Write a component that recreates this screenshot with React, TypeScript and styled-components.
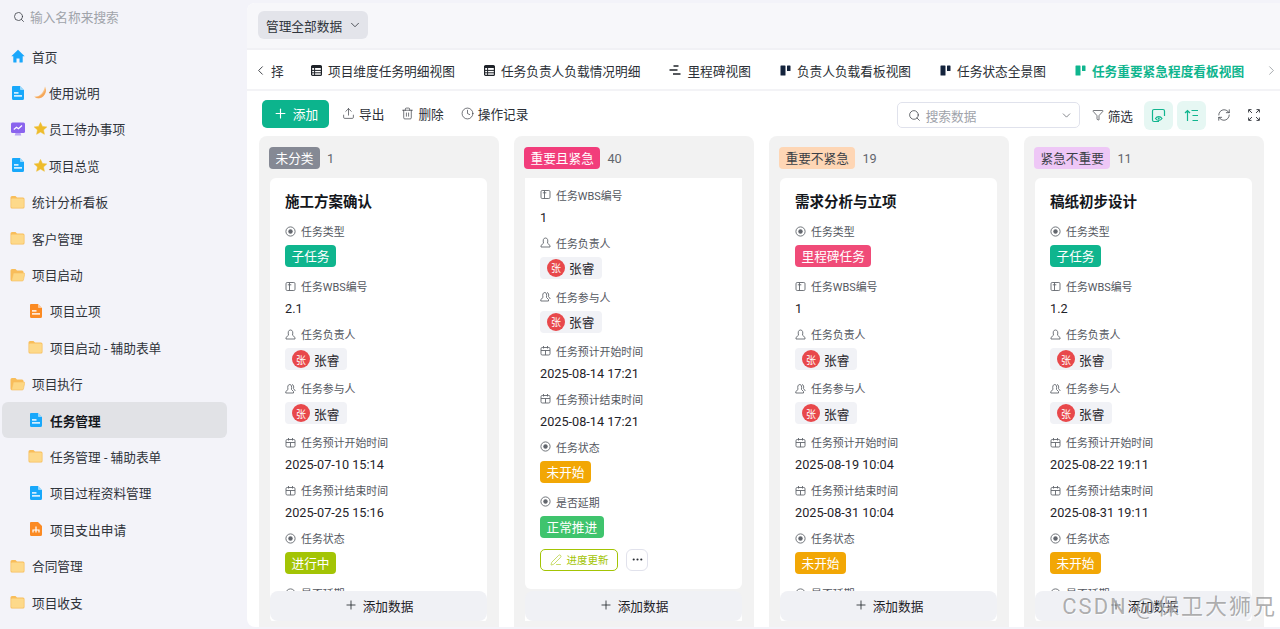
import React from "react";
import styled, { createGlobalStyle } from "styled-components";
import { ChevronDown, ChevronLeft, ChevronRight, Clock, Ellipsis, Funnel, PenLine, Plus, RefreshCw, Search, Trash2, Upload } from "lucide-react";

const GlobalStyle = createGlobalStyle`
  html, body {
    margin: 0;
    height: 100%;
    overflow: hidden;
    background: #f3f3f9;
    font-family: Roboto, "Noto Sans CJK SC", sans-serif;
    color: #1f2329;
  }
`;

/* ---- drawn icons ---- */

const DocIcon = ({ color = "#18a8fb" }: { color?: string }) => (
  <svg width="14" height="14" viewBox="0 0 14 14">
    <path d="M2 0h7l4 4v8.5a1.5 1.5 0 0 1-1.5 1.5h-9.500A1.500 1.500 0 0 1 1 12.500V1a1 1 0 0 1 1-1z" fill={color} />
    <path d="M9 0l4 4H9.800A.8.8 0 0 1 9 3.200z" fill="#fff" opacity=".55" />
    <rect x="3" y="6.200" width="4.500" height="1.400" fill="#fff" />
    <rect x="3" y="9.200" width="8" height="1.400" fill="#fff" />
  </svg>
);

const FolderIcon = ({ open }: { open?: boolean }) => (
  <svg width="15" height="14" viewBox="0 0 15 14">
    {open ? (
      <>
        <path d="M.5 2.500A1.500 1.500 0 0 1 2 1h3.500L7 2.500h5a1.500 1.500 0 0 1 1.500 1.500v1H4L2 13H2a1.500 1.500 0 0 1-1.500-1.500z" fill="#f8bd5a" />
        <path d="M3.500 5h10.200a1 1 0 0 1 1 1.200l-1.300 6a1.200 1.200 0 0 1-1.200.8H1.500z" fill="#fdd784" stroke="#f8bd5a" strokeWidth=".6" />
      </>
    ) : (
      <>
        <path d="M.5 2.500A1.500 1.500 0 0 1 2 1h3.500L7 2.500h6a1.500 1.500 0 0 1 1.500 1.500v8a1.500 1.500 0 0 1-1.500 1.500H2A1.500 1.500 0 0 1 .5 12z" fill="#f8bd5a" />
        <rect x="1.200" y="3.600" width="12.600" height="9.200" rx="1" fill="#fdd98a" />
      </>
    )}
  </svg>
);

const HomeIcon = () => (
  <svg width="14" height="14" viewBox="0 0 14 14">
    <path d="M7 .8L.3 7.200h2V13a.6.6 0 0 0 .6.600h2.600V9.500h3v4.100h2.600a.6.6 0 0 0 .6-.6V7.200h2z" fill="#1aa7fb" />
  </svg>
);

const MonitorIcon = () => (
  <svg width="14" height="14" viewBox="0 0 14 14">
    <path d="M4.500 11h5l.8 2.500H3.700z" fill="#b9a4f5" />
    <rect x="0" y="0.500" width="14" height="10.500" rx="1.500" fill="#8a63ee" />
    <path d="M2.800 7.500l2.700-2.300 2 1.500 3.500-3.200" fill="none" stroke="#fff" strokeWidth="1.200" />
  </svg>
);

const ExpenseIcon = () => (
  <svg width="14" height="14" viewBox="0 0 14 14">
    <path d="M2 0h7l4 4v8.500a1.500 1.500 0 0 1-1.500 1.500h-9.500A1.500 1.500 0 0 1 1 12.500V1a1 1 0 0 1 1-1z" fill="#fb8a23" />
    <path d="M7 4.500v2.500M4 10.500V8h6v2.500M7 7v3.500" fill="none" stroke="#fff" strokeWidth="1.200" />
  </svg>
);

const MoonIcon = () => (
  <svg width="13" height="13" viewBox="0 0 13 13">
    <path d="M11 .5C13.500 5 10.500 12 5 12.500 3 12.700 1.200 12 .3 10.300 4 11.500 9.500 8 11 .5z" fill="#f9c283" />
    <path d="M11.700 2.500C12.500 6.500 10 11.600 5 12.100 3.500 12.200 2.300 12 1.300 11.200 5.500 11.500 10 8 11.700 2.500z" fill="#f5a75c" />
  </svg>
);

const StarIcon = () => (
  <svg width="13" height="13" viewBox="0 0 13 13">
    <path d="M6.500.4l1.900 4 4.400.5-3.300 3 .9 4.400-3.900-2.200-3.900 2.200.9-4.400L.2 4.900l4.400-.5z" fill="#eebc2c" stroke="#eebc2c" strokeLinejoin="round" strokeWidth=".5" />
  </svg>
);

const TableIcon = () => (
  <svg width="11" height="11" viewBox="0 0 11 11">
    <rect x=".6" y=".6" width="9.800" height="9.800" rx="1" fill="none" stroke="#1f2329" strokeWidth="1.200" />
    <path d="M.6 1h9.800v2H.6z" fill="#1f2329" />
    <path d="M.6 5.400h9.800M.6 7.800h9.800M3.600 3v7" stroke="#1f2329" strokeWidth="1" />
  </svg>
);

const GanttIcon = () => (
  <svg width="12" height="12" viewBox="0 0 12 12">
    <path d="M4.500 2h5M.5 6h8M4 10h7.500" stroke="#1f2329" strokeWidth="1.600" />
  </svg>
);

const KanbanIcon = ({ color = "#14233c" }: { color?: string }) => (
  <svg width="11" height="11" viewBox="0 0 11 11">
    <rect x="0.500" y="0.500" width="5" height="10" rx=".6" fill={color} />
    <rect x="7" y="0.500" width="3.500" height="5.500" rx=".6" fill={color} />
  </svg>
);

const StickerIcon = () => (
  <svg width="15" height="15" viewBox="0 0 15 15" fill="none" stroke="#11b58f" strokeWidth="1.200">
    <path d="M8 13.500H3A1.500 1.500 0 0 1 1.500 12V3A1.500 1.500 0 0 1 3 1.500h9A1.500 1.500 0 0 1 13.500 3v5" />
    <path d="M4.500 10.500c1.500-2.500 5-2.500 6.500 0-1.500 2.500-5 2.500-6.500 0z" />
    <circle cx="7.750" cy="10.500" r="1" fill="#11b58f" stroke="none" />
  </svg>
);

const SortIcon = () => (
  <svg width="15" height="15" viewBox="0 0 15 15" fill="none" stroke="#11b58f" strokeWidth="1.200">
    <path d="M3.500 13V2.500M1 5l2.500-2.500L6 5M7.500 2.500H14M8.500 7.500H14M8.500 12.500H14" />
  </svg>
);

const FullscreenIcon = () => (
  <svg width="12" height="12" viewBox="0 0 12 12" fill="none" stroke="#2b2f36" strokeWidth=".9">
    <path d="M.6 3.500V.6h2.900M8.500.6h2.900v2.900M.6 8.500v2.900h2.900M8.500 11.400h2.900V8.500M1 1l3 3M11 1L8 4M1 11l3-3M11 11L8 8" />
  </svg>
);

type FieldKind = "radio" | "text" | "user" | "users" | "date";

const FieldIcon = ({ kind }: { kind: FieldKind }) => (
  <svg width="11" height="11" viewBox="0 0 11 11" fill="none" stroke="#62666d" strokeWidth=".9">
    {kind === "radio" && (
      <>
        <circle cx="5.500" cy="5.500" r="4.600" />
        <circle cx="5.500" cy="5.500" r="2.200" fill="#62666d" stroke="none" />
      </>
    )}
    {kind === "text" && (
      <>
        <rect x="1" y="1.500" width="9" height="8" rx="1.200" />
        <path d="M4.500 1.500v8M2.800 3.800h3.500" />
      </>
    )}
    {kind === "user" && (
      <path d="M3.500 6.200C2.700 3 3.500 1 5.500 1s2.800 2 2 5.200L10 8.500V10H1V8.500z" />
    )}
    {kind === "users" && (
      <>
        <path d="M3 6.500C2.300 3.500 3 1.500 4.800 1.500S6.800 3.500 6.500 6.500L8.500 8.500V10H.8V8.500z" />
        <path d="M7 1.500c1.500.3 2 2 1.500 4l1.800 2.500" />
      </>
    )}
    {kind === "date" && (
      <>
        <rect x="1" y="2.500" width="9" height="7.500" rx="1.200" />
        <path d="M1 5.500h9M3.500 1v2.500M7.500 1v2.500M5.500 5.500V10" />
      </>
    )}
  </svg>
);

/* ---- data ---- */

type NavIcon = "home" | "doc" | "monitor" | "folder" | "open" | "orange" | "expense";

interface NavItem {
  name: string;
  icon: NavIcon;
  child?: boolean;
  active?: boolean;
  prefix?: "moon" | "star";
}

const navItems: NavItem[] = [
  { name: "首页", icon: "home" },
  { name: "使用说明", icon: "doc", prefix: "moon" },
  { name: "员工待办事项", icon: "monitor", prefix: "star" },
  { name: "项目总览", icon: "doc", prefix: "star" },
  { name: "统计分析看板", icon: "folder" },
  { name: "客户管理", icon: "folder" },
  { name: "项目启动", icon: "open" },
  { name: "项目立项", icon: "orange", child: true },
  { name: "项目启动 - 辅助表单", icon: "folder", child: true },
  { name: "项目执行", icon: "open" },
  { name: "任务管理", icon: "doc", child: true, active: true },
  { name: "任务管理 - 辅助表单", icon: "folder", child: true },
  { name: "项目过程资料管理", icon: "doc", child: true },
  { name: "项目支出申请", icon: "expense", child: true },
  { name: "合同管理", icon: "folder" },
  { name: "项目收支", icon: "folder" },
];

const renderNavIcon = (icon: NavIcon) => {
  switch (icon) {
    case "home":
      return <HomeIcon />;
    case "doc":
      return <DocIcon />;
    case "monitor":
      return <MonitorIcon />;
    case "open":
      return <FolderIcon open />;
    case "orange":
      return <DocIcon color="#fb8a23" />;
    case "expense":
      return <ExpenseIcon />;
    default:
      return <FolderIcon />;
  }
};

const tabs = [
  { name: "项目维度任务明细视图", icon: <TableIcon /> },
  { name: "任务负责人负载情况明细", icon: <TableIcon /> },
  { name: "里程碑视图", icon: <GanttIcon /> },
  { name: "负责人负载看板视图", icon: <KanbanIcon /> },
  { name: "任务状态全景图", icon: <KanbanIcon /> },
];

const GREEN = "#0fb58e";
const PINK = "#f04b78";
const AMBER = "#f2a705";
const LIME = "#a3c405";

interface TaskCard {
  title: string;
  typeName: string;
  typeColor: string;
  wbs: string;
  start: string;
  end: string;
  status: string;
  statusColor: string;
}

interface BoardColumn {
  tag: string;
  tagBg: string;
  tagColor: string;
  count: number;
  card?: TaskCard;
}

const columns: BoardColumn[] = [
  {
    tag: "未分类",
    tagBg: "#858994",
    tagColor: "#fff",
    count: 1,
    card: {
      title: "施工方案确认",
      typeName: "子任务",
      typeColor: GREEN,
      wbs: "2.1",
      start: "2025-07-10 15:14",
      end: "2025-07-25 15:16",
      status: "进行中",
      statusColor: LIME,
    },
  },
  { tag: "重要且紧急", tagBg: "#f23d7b", tagColor: "#fff", count: 40 },
  {
    tag: "重要不紧急",
    tagBg: "#fed6b5",
    tagColor: "#3b3f46",
    count: 19,
    card: {
      title: "需求分析与立项",
      typeName: "里程碑任务",
      typeColor: PINK,
      wbs: "1",
      start: "2025-08-19 10:04",
      end: "2025-08-31 10:04",
      status: "未开始",
      statusColor: AMBER,
    },
  },
  {
    tag: "紧急不重要",
    tagBg: "#eec7f6",
    tagColor: "#3b3f46",
    count: 11,
    card: {
      title: "稿纸初步设计",
      typeName: "子任务",
      typeColor: GREEN,
      wbs: "1.2",
      start: "2025-08-22 19:11",
      end: "2025-08-31 19:11",
      status: "未开始",
      statusColor: AMBER,
    },
  },
];

/* ---- small parts ---- */

const Person = () => (
  <PersonChip>
    <Avatar>张</Avatar>
    张睿
  </PersonChip>
);

const Label = ({ kind, text }: { kind: FieldKind; text: string }) => (
  <FieldLabel>
    <FieldIcon kind={kind} />
    {text}
  </FieldLabel>
);

const PeopleAndDates = ({ start, end }: { start: string; end: string }) => (
  <>
    <Field>
      <Label kind="user" text="任务负责人" />
      <Person />
    </Field>
    <Field>
      <Label kind="users" text="任务参与人" />
      <Person />
    </Field>
    <Field>
      <Label kind="date" text="任务预计开始时间" />
      <FieldValue>{start}</FieldValue>
    </Field>
    <Field>
      <Label kind="date" text="任务预计结束时间" />
      <FieldValue>{end}</FieldValue>
    </Field>
  </>
);

const App = () => {
  return (
    <Page>
      <GlobalStyle />
      <Sidebar>
        <SideSearch>
          <Search size={12} strokeWidth={1.6} color="#3b3f46" />
          输入名称来搜索
        </SideSearch>
        <NavList>
          {navItems.map((item) => (
            <NavRow key={item.name} $child={item.child} $active={item.active}>
              <NavIconBox>{renderNavIcon(item.icon)}</NavIconBox>
              {item.prefix ? (
                <NavPrefix>{item.prefix === "moon" ? <MoonIcon /> : <StarIcon />}</NavPrefix>
              ) : null}
              {item.name}
            </NavRow>
          ))}
        </NavList>
      </Sidebar>

      <Main>
        <TopBar>
          <ScopeButton>
            管理全部数据
            <ChevronDown size={14} strokeWidth={1.4} />
          </ScopeButton>
        </TopBar>

        <TabBar>
          <TabArrow>
            <ChevronLeft size={15} strokeWidth={1.4} />
          </TabArrow>
          <CutTab>择</CutTab>
          {tabs.map((tab) => (
            <Tab key={tab.name}>
              {tab.icon}
              {tab.name}
            </Tab>
          ))}
          <Tab $active>
            <KanbanIcon color="#0fb58e" />
            任务重要紧急程度看板视图
          </Tab>
          <TabArrowRight>
            <ChevronRight size={15} strokeWidth={1.2} color="#8a8d93" />
          </TabArrowRight>
        </TabBar>

        <Toolbar>
          <ToolGroup>
            <AddButton>
              <Plus size={15} strokeWidth={1.8} />
              添加
            </AddButton>
            <ToolButton>
              <Upload size={13} strokeWidth={1.2} />
              导出
            </ToolButton>
            <ToolButton>
              <Trash2 size={13} strokeWidth={1.2} />
              删除
            </ToolButton>
            <ToolButton>
              <Clock size={13} strokeWidth={1.2} />
              操作记录
            </ToolButton>
          </ToolGroup>
          <RightGroup>
            <SearchBox>
              <Search size={13} strokeWidth={1.4} color="#3b3f46" />
              <SearchText>搜索数据</SearchText>
              <ChevronDown size={13} strokeWidth={1.3} color="#55585f" />
            </SearchBox>
            <FilterButton>
              <Funnel size={12} strokeWidth={1.3} />
              筛选
            </FilterButton>
            <ToggleButton>
              <StickerIcon />
            </ToggleButton>
            <ToggleButton>
              <SortIcon />
            </ToggleButton>
            <PlainIconButton>
              <RefreshCw size={14} strokeWidth={1.2} color="#2b2f36" />
            </PlainIconButton>
            <PlainIconButton>
              <FullscreenIcon />
            </PlainIconButton>
          </RightGroup>
        </Toolbar>

        <Board>
          {columns.map((column) => (
            <Column key={column.tag}>
              <ColumnHeader>
                <ColumnTag $bg={column.tagBg} $color={column.tagColor}>
                  {column.tag}
                </ColumnTag>
                <ColumnCount>{column.count}</ColumnCount>
              </ColumnHeader>
              <CardList>
                {column.card ? (
                  <Card>
                    <CardTitle>{column.card.title}</CardTitle>
                    <Field>
                      <Label kind="radio" text="任务类型" />
                      <ColorTag $bg={column.card.typeColor}>{column.card.typeName}</ColorTag>
                    </Field>
                    <Field>
                      <Label kind="text" text="任务WBS编号" />
                      <FieldValue>{column.card.wbs}</FieldValue>
                    </Field>
                    <PeopleAndDates start={column.card.start} end={column.card.end} />
                    <Field>
                      <Label kind="radio" text="任务状态" />
                      <ColorTag $bg={column.card.statusColor}>{column.card.status}</ColorTag>
                    </Field>
                    <Field>
                      <Label kind="radio" text="是否延期" />
                    </Field>
                  </Card>
                ) : (
                  <>
                    <ScrolledCard>
                      <Field>
                        <Label kind="text" text="任务WBS编号" />
                        <FieldValue>1</FieldValue>
                      </Field>
                      <PeopleAndDates start="2025-08-14 17:21" end="2025-08-14 17:21" />
                      <Field>
                        <Label kind="radio" text="任务状态" />
                        <ColorTag $bg={AMBER}>未开始</ColorTag>
                      </Field>
                      <Field>
                        <Label kind="radio" text="是否延期" />
                        <ColorTag $bg="#3fc46d">正常推进</ColorTag>
                      </Field>
                      <CardActions>
                        <ProgressButton>
                          <PenLine size={12} strokeWidth={1.2} />
                          进度更新
                        </ProgressButton>
                        <MoreButton>
                          <Ellipsis size={13} strokeWidth={2} />
                        </MoreButton>
                      </CardActions>
                    </ScrolledCard>
                    <NextCard />
                  </>
                )}
              </CardList>
              <AddData>
                <Plus size={14} strokeWidth={1.4} />
                添加数据
              </AddData>
            </Column>
          ))}
        </Board>
      </Main>
      <Watermark>CSDN @保卫大狮兄</Watermark>
    </Page>
  );
};

/* ---- styles ---- */

const Page = styled.div`
  display: flex;
  height: 100vh;
  overflow: hidden;
  font-size: 12.7px;
`;

const Sidebar = styled.aside`
  flex: none;
  width: 247px;
  padding-left: 2px;
  box-sizing: border-box;
  background: #f3f3f9;
`;

const SideSearch = styled.div`
  display: flex;
  align-items: center;
  gap: 5px;
  height: 33px;
  padding-left: 11px;
  color: #a0a3aa;
`;

const NavList = styled.nav`
  margin-top: 5px;
  width: 225px;
`;

const NavRow = styled.div<{ $child?: boolean; $active?: boolean }>`
  display: flex;
  align-items: center;
  height: 36.4px;
  padding-left: ${(p) => (p.$child ? "26px" : "8px")};
  border-radius: 6px;
  color: ${(p) => (p.$active ? "#14171c" : "#30343b")};
  font-weight: ${(p) => (p.$active ? 600 : 400)};
  background: ${(p) => (p.$active ? "#e1e2e6" : "transparent")};
`;

const NavIconBox = styled.span`
  display: inline-flex;
  justify-content: center;
  flex: none;
  width: 15px;
  margin-right: 7px;
`;

const NavPrefix = styled.span`
  display: inline-flex;
  margin: 0 2px 0 2px;
`;

const Main = styled.main`
  flex: 1;
  min-width: 0;
  display: flex;
  flex-direction: column;
  margin: 3px 0 2px;
  background: #fff;
  border-radius: 8px 0 0 8px;
  overflow: hidden;
`;

const TopBar = styled.div`
  display: flex;
  align-items: center;
  flex: none;
  height: 47px;
  padding: 0 0 1px 11px;
  background: #f7f7fa;
  border-bottom: 2px solid #f1f1f5;
  box-sizing: border-box;
`;

const ScopeButton = styled.div`
  display: flex;
  align-items: center;
  gap: 6px;
  width: 110px;
  height: 28px;
  padding-left: 8px;
  box-sizing: border-box;
  border-radius: 6px;
  background: #e3e4ea;
  color: #30343b;
`;

const TabBar = styled.div`
  position: relative;
  display: flex;
  align-items: stretch;
  flex: none;
  height: 41px;
  padding-top: 1px;
  border-bottom: 2px solid #f3f3f6;
  box-sizing: border-box;
  overflow: hidden;
`;

const TabArrow = styled.span`
  display: flex;
  align-items: center;
  width: 24px;
  padding-left: 6px;
  box-sizing: border-box;
  color: #2b2f36;
`;

const TabArrowRight = styled.span`
  display: flex;
  align-items: center;
  margin-left: 6px;
`;

const CutTab = styled.span`
  display: flex;
  align-items: center;
  width: 25px;
  color: #30343b;
`;

const Tab = styled.div<{ $active?: boolean }>`
  display: flex;
  align-items: center;
  gap: 6px;
  padding: 0 14px 0 15px;
  white-space: nowrap;
  color: ${(p) => (p.$active ? "#0fb58e" : "#2b2f36")};
  font-weight: ${(p) => (p.$active ? 600 : 400)};
  border-bottom: 2px solid ${(p) => (p.$active ? "#0fb58e" : "transparent")};
  margin-bottom: -2px;
`;

const Toolbar = styled.div`
  display: flex;
  align-items: center;
  justify-content: space-between;
  flex: none;
  height: 45px;
  padding: 0 11px 0 15px;
  box-sizing: border-box;
`;

const ToolGroup = styled.div`
  display: flex;
  align-items: center;
  gap: 17px;
`;

const RightGroup = styled.div`
  display: flex;
  align-items: center;
  margin-top: 3px;
`;

const AddButton = styled.div`
  display: flex;
  align-items: center;
  justify-content: center;
  gap: 5px;
  width: 67px;
  height: 28px;
  margin-right: -4px;
  border-radius: 5px;
  background: #0cb48d;
  color: #fff;
`;

const ToolButton = styled.div`
  display: flex;
  align-items: center;
  gap: 4px;
  color: #2b2f36;
`;

const SearchBox = styled.div`
  display: flex;
  align-items: center;
  width: 183px;
  height: 26px;
  padding: 0 6px 0 10px;
  box-sizing: border-box;
  border: 1px solid #e0e2ec;
  border-radius: 5px;
  color: #a0a3aa;
`;

const SearchText = styled.span`
  flex: 1;
  margin-left: 5px;
`;

const FilterButton = styled(ToolButton)`
  margin: 0 11px 0 12px;
`;

const ToggleButton = styled.div`
  display: flex;
  align-items: center;
  justify-content: center;
  width: 29px;
  height: 29px;
  margin-right: 4px;
  border-radius: 6px;
  background: #e6f7f3;
`;

const PlainIconButton = styled.div`
  display: flex;
  align-items: center;
  justify-content: center;
  width: 30px;
  height: 29px;
  &:nth-last-child(2) {
    margin-left: -1px;
  }
`;

const Board = styled.div`
  display: flex;
  flex: 1;
  min-height: 0;
  gap: 15px;
  padding-left: 11.5px;
`;

const Column = styled.section`
  position: relative;
  display: flex;
  flex-direction: column;
  flex: none;
  width: 240px;
  background: #f2f2f2;
  border-radius: 8px 8px 0 0;
  overflow: hidden;
`;

const ColumnHeader = styled.header`
  display: flex;
  align-items: center;
  gap: 7px;
  flex: none;
  height: 42px;
  padding: 2px 10.5px 0;
  box-sizing: border-box;
`;

const ColumnTag = styled.span<{ $bg: string; $color: string }>`
  display: inline-flex;
  align-items: center;
  height: 22px;
  padding: 0 6.5px 1px;
  box-sizing: border-box;
  border-radius: 4px;
  background: ${(p) => p.$bg};
  color: ${(p) => p.$color};
`;

const ColumnCount = styled.span`
  color: #62666d;
`;

const CardList = styled.div`
  flex: 1;
  min-height: 0;
  margin-bottom: 6px;
  padding: 0 11.5px;
  overflow: hidden;
`;

const Card = styled.article`
  padding: 15px 15px 12px;
  background: #fff;
  border-radius: 6px;
`;

const ScrolledCard = styled(Card)`
  padding-top: 8.5px;
  padding-bottom: 18px;
  border-radius: 0 0 6px 6px;
`;

const NextCard = styled.div`
  height: 60px;
  margin-top: 8px;
  background: #fff;
  border-radius: 6px 6px 0 0;
`;

const CardTitle = styled.h3`
  margin: 0 0 10px;
  font-size: 14.5px;
  line-height: 20px;
  font-weight: 700;
  color: #14171c;
`;

const Field = styled.div`
  display: flex;
  flex-direction: column;
  align-items: flex-start;
  gap: 6px;
  margin-bottom: 10px;
`;

const FieldLabel = styled.div`
  display: flex;
  align-items: center;
  gap: 5px;
  height: 16px;
  font-size: 10.9px;
  color: #55585f;
`;

const FieldValue = styled.div`
  height: 16px;
  line-height: 18px;
  color: #1f2329;
`;

const ColorTag = styled.span<{ $bg: string }>`
  display: inline-flex;
  align-items: center;
  height: 22px;
  padding: 0 6.5px 1px;
  box-sizing: border-box;
  margin-bottom: 1px;
  border-radius: 4px;
  background: ${(p) => p.$bg};
  color: #fff;
`;

const PersonChip = styled.span`
  display: inline-flex;
  align-items: center;
  gap: 4px;
  height: 22px;
  padding: 0 8px 0 7px;
  box-sizing: border-box;
  border-radius: 4px;
  background: #f1f2f6;
`;

const Avatar = styled.span`
  display: inline-flex;
  align-items: center;
  justify-content: center;
  width: 18px;
  height: 18px;
  border-radius: 50%;
  background: #e8484b;
  color: #fff;
  font-size: 10px;
`;

const CardActions = styled.div`
  display: flex;
  align-items: center;
  gap: 8px;
  margin-top: 3.5px;
`;

const ProgressButton = styled.div`
  display: flex;
  align-items: center;
  justify-content: center;
  gap: 5px;
  width: 78px;
  height: 22px;
  box-sizing: border-box;
  border: 1px solid #a3c405;
  border-radius: 5px;
  color: #a3c405;
  font-size: 10.5px;
`;

const MoreButton = styled.div`
  display: flex;
  align-items: center;
  justify-content: center;
  width: 22px;
  height: 22px;
  box-sizing: border-box;
  border: 1px solid #e1e2ec;
  border-radius: 6px;
  color: #2b2f36;
`;

const AddData = styled.div`
  position: absolute;
  left: 11.5px;
  right: 11.5px;
  bottom: 6px;
  display: flex;
  align-items: center;
  justify-content: center;
  gap: 5px;
  height: 30px;
  padding-bottom: 2px;
  box-sizing: border-box;
  border-radius: 8px;
  background: #f0f1f5;
  color: #1f2329;
`;

const Watermark = styled.div`
  position: absolute;
  right: 3px;
  bottom: 8px;
  font-size: 22px;
  line-height: 28px;
  letter-spacing: 2px;
  color: rgba(125, 125, 125, 0.62);
  text-shadow: 1px 1px 1px rgba(255, 255, 255, 0.7);
  white-space: nowrap;
`;

export default App;
